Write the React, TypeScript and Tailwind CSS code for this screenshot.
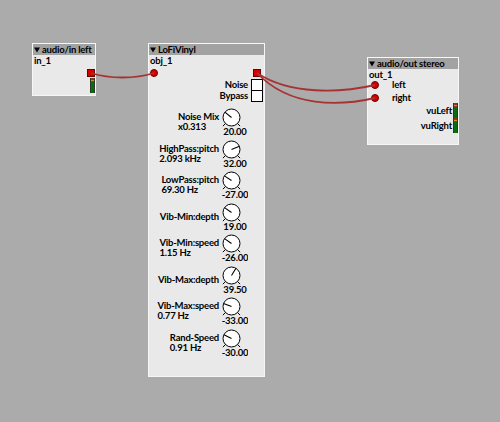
import React from "react";

const txt = "font-['Lato','Liberation_Sans',Arial,sans-serif] text-[9.5px] leading-[10px] font-bold tracking-[-0.2px] text-black whitespace-nowrap";

function Tri() {
  return (
    <svg width="6" height="6" className="block shrink-0">
      <polygon points="0,0.5 6,0.5 3,5.5" fill="black" />
    </svg>
  );
}

function Header({ title }: { title: string }) {
  return (
    <div className="h-[11px] bg-[#a2a2a2] flex items-center gap-[2px] pl-[1px] shrink-0">
      <Tri />
      <span className={txt}>{title}</span>
    </div>
  );
}

function Knob({ value, bipolar }: { value: number; bipolar: boolean }) {
  const min = bipolar ? -64 : 0;
  const frac = (value - min) / (64 - min);
  const a = ((-135 + 270 * frac) * Math.PI) / 180;
  const cx = 9.5;
  const cy = 9.5;
  const r = 8.5;
  const x2 = cx + r * Math.sin(a);
  const y2 = cy - r * Math.cos(a);
  const t = (135 * Math.PI) / 180;
  const foot = (s: number) => {
    const ang = s * t;
    return {
      x1: cx + r * Math.sin(ang),
      y1: cy - r * Math.cos(ang),
      x2: cx + 12.2 * Math.sin(ang),
      y2: cy - 12.2 * Math.cos(ang),
    };
  };
  const fl = foot(-1);
  const fr = foot(1);
  return (
    <div className="w-[28px] flex flex-col shrink-0">
      <svg width="22" height="19" className="block">
        <circle cx={cx} cy={cy} r={r} fill="white" stroke="black" strokeWidth="1" />
        <line x1={cx} y1={cy} x2={x2} y2={y2} stroke="black" strokeWidth="1.1" />
        <line {...fl} stroke="black" strokeWidth="1" />
        <line {...fr} stroke="black" strokeWidth="1" />
      </svg>
      <div className="w-[26px] h-[10px] flex justify-center overflow-hidden">
        <span className={txt + " shrink-0"}>{value.toFixed(2)}</span>
      </div>
    </div>
  );
}

const knobs: { l1: string; l2?: string; v: number; bi: boolean }[] = [
  { l1: "Noise Mix", l2: "x0.313", v: 20, bi: false },
  { l1: "HighPass:pitch", l2: "2.093 kHz", v: 32, bi: true },
  { l1: "LowPass:pitch", l2: "69.30 Hz", v: -27, bi: true },
  { l1: "Vib-Min:depth", v: 19, bi: false },
  { l1: "Vib-Min:speed", l2: "1.15 Hz", v: -26, bi: true },
  { l1: "Vib-Max:depth", v: 39.5, bi: false },
  { l1: "Vib-Max:speed", l2: "0.77 Hz", v: -33, bi: true },
  { l1: "Rand-Speed", l2: "0.91 Hz", v: -30, bi: true },
];

function Inlet() {
  return <div className="w-[8px] h-[8px] rounded-full bg-[#d40000] border border-[#6a0000] shrink-0" />;
}
function Outlet() {
  return <div className="w-[8px] h-[8px] bg-[#d40000] border border-[#6a0000] shrink-0" />;
}

function Vu() {
  return (
    <div className="w-[5px] h-[15px] flex flex-col border-x border-[#2a3a2a] shrink-0">
      <div className="h-[2px] bg-[#8c3c1e]" />
      <div className="h-[1px] bg-[#d8901c]" />
      <div className="h-[1px] bg-[#8c3c1e]" />
      <div className="flex-1 bg-[#0d6b12]" />
    </div>
  );
}

function Check() {
  return <div className="w-[12px] h-[12px] bg-white border border-black shrink-0" />;
}

export default function App() {
  return (
    <div className="relative w-[500px] h-[422px] bg-[#ababab] overflow-hidden">
      {/* audio/in left */}
      <div className="absolute left-[32px] top-[43px] w-[64px] h-[53px] bg-[#e9e9e9] border border-[#f7f7f7] flex flex-col">
        <Header title="audio/in left" />
        <div className={txt + " mt-[1px] pl-[1px]"}>in_1</div>
        <div className="h-[10px] mt-[2px] flex items-center justify-end">
          <Outlet />
        </div>
        <div className="flex justify-end">
          <Vu />
        </div>
      </div>

      {/* LoFiVinyl */}
      <div className="absolute left-[148px] top-[43px] w-[117px] h-[334px] bg-[#e9e9e9] border border-[#f7f7f7] flex flex-col">
        <Header title="LoFiVinyl" />
        <div className={txt + " mt-[1px] pl-[1px]"}>obj_1</div>
        <div className="h-[10px] mt-[2px] flex items-center justify-between pl-[1px] pr-[3px]">
          <Inlet />
          <Outlet />
        </div>
        <div className="flex flex-col items-end pr-[1px] mt-[1px]">
          <div className="flex items-center gap-[3px]">
            <span className={txt}>Noise</span>
            <Check />
          </div>
          <div className="flex items-center gap-[3px] -mt-px">
            <span className={txt}>Bypass</span>
            <Check />
          </div>
        </div>
        <div className="flex flex-col mt-[6px] pr-[14px]">
          {knobs.map((k) => (
            <div key={k.l1} className="h-[31.5px] flex justify-end items-start gap-[3px]">
              <div className="h-[28px] flex flex-col justify-center">
                <span className={txt}>{k.l1}</span>
                {k.l2 && <span className={txt}>{k.l2}</span>}
              </div>
              <Knob value={k.v} bipolar={k.bi} />
            </div>
          ))}
        </div>
      </div>

      {/* audio/out stereo */}
      <div className="absolute left-[367px] top-[57px] w-[92px] h-[88px] bg-[#e9e9e9] border border-[#f7f7f7] flex flex-col">
        <Header title="audio/out stereo" />
        <div className={txt + " mt-[1px] pl-[1px]"}>out_1</div>
        <div className="h-[10px] flex items-center pl-[3px]">
          <Inlet />
          <span className={txt + " ml-[13px]"}>left</span>
        </div>
        <div className="h-[10px] mt-[3px] flex items-center pl-[3px]">
          <Inlet />
          <span className={txt + " ml-[13px]"}>right</span>
        </div>
        <div className="flex flex-col items-end">
          <div className="h-[15px] flex items-center gap-[1px]">
            <span className={txt}>vuLeft</span>
            <Vu />
          </div>
          <div className="h-[15px] flex items-center gap-[1px]">
            <span className={txt}>vuRight</span>
            <Vu />
          </div>
        </div>
      </div>

      {/* wires */}
      <svg className="absolute inset-0 pointer-events-none" width="500" height="422">
        {[
          "M91,73 C110,79 135,79 154,73",
          "M257,73 C290,95 340,93 375,85",
          "M257,73 C290,108 340,106 375,98",
        ].map((d) => (
          <path key={d} d={d} fill="none" stroke="#a63232" strokeWidth="1.8" />
        ))}
      </svg>
    </div>
  );
}
